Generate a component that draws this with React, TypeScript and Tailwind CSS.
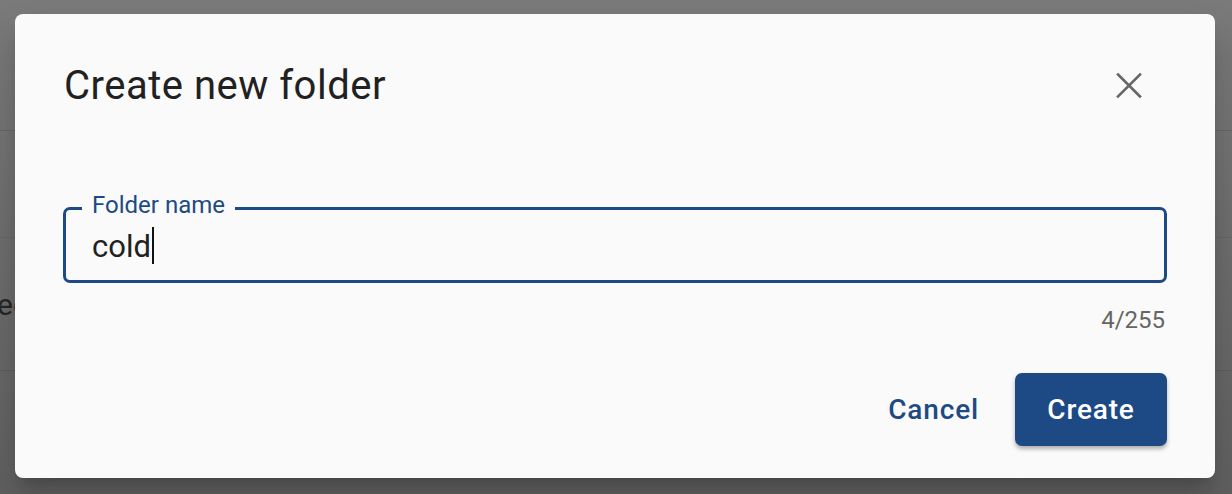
import { useState } from 'react';

export default function App() {
  const [name, setName] = useState('cold');

  return (
    <div className="relative w-[1232px] h-[494px] overflow-hidden font-['Roboto',sans-serif]">
      {/* page behind the scrim */}
      <div className="flex flex-col h-full bg-gradient-to-b from-[#7a7a7a] to-[#606060]">
        <div className="h-[131px] border-b border-[#666]" />
        <div className="h-[107px] border-b border-[#666]" />
        <div className="h-[133px] border-b border-[#5c5c5c] flex items-center">
          <span className="-ml-[3px] text-[30px] text-[#262626]">ec</span>
        </div>
        <div className="flex-1" />
      </div>

      {/* dialog */}
      <div className="absolute left-[15px] top-[14px] w-[1200px] h-[464px] rounded-[8px] bg-[#fafafa] shadow-[0_11px_15px_-7px_rgba(0,0,0,0.2),0_24px_38px_3px_rgba(0,0,0,0.14)] px-[48px] pt-[48px] flex flex-col">
        <div className="flex items-start justify-between pl-[1px] h-[48px]">
          <h2 className="text-[40px] leading-[48px] tracking-[0.5px] text-[#212121] font-normal">Create new folder</h2>
          <button className="mt-[10px] mr-[25px] w-[26px] h-[27px] text-[#666]">
            <svg viewBox="0 0 26 27" className="w-[26px] h-[27px]" fill="none" stroke="currentColor" strokeWidth="2.6" strokeLinecap="square">
              <path d="M2 2.5L24 24.5M24 2.5L2 24.5" />
            </svg>
          </button>
        </div>

        <div className="relative mt-[97px] h-[76px] rounded-[7px] border-[3px] border-[#1d4a85] flex items-center">
          <span className="absolute left-[16px] -top-[19px] px-[10px] bg-[#fafafa] text-[24px] leading-[28px] text-[#1d4a85]">Folder name</span>
          <input
            value={name}
            onChange={(e) => setName(e.target.value)}
            className="w-full bg-transparent outline-none pl-[26px] pt-[3px] text-[31px] leading-[36px] text-[#212121] caret-black"
          />
          <span className="absolute left-[86px] top-[17px] w-[2px] h-[37px] bg-[#111]" />
        </div>

        <div className="mt-[23px] text-right pr-[2px] text-[24px] leading-[28px] text-[#666]">{name.length}/255</div>

        <div className="mt-[39px] flex justify-end items-center gap-[12px]">
          <button className="h-[73px] px-[24px] text-[28px] font-medium tracking-[0.03em] text-[#1d4a85]">Cancel</button>
          <button className="h-[73px] w-[152px] rounded-[7px] bg-[#1d4a85] text-[28px] font-medium tracking-[0.03em] text-white shadow-[0_3px_4px_rgba(0,0,0,0.3)]">Create</button>
        </div>
      </div>
    </div>
  );
}
